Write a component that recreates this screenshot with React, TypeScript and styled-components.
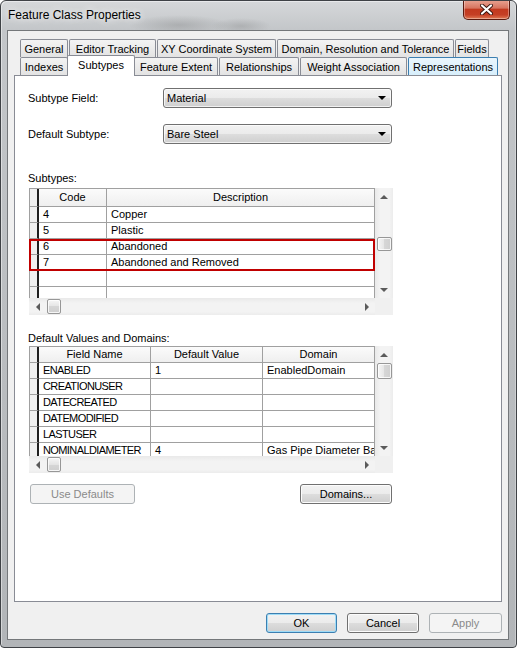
import styled, { createGlobalStyle, css } from 'styled-components';

type Dir = 'up' | 'down' | 'left' | 'right';

interface Column {
  title: string;
  width: number;
  tight?: boolean;
}

interface GridProps {
  columns: Column[];
  rows: string[][];
  headerHeight: number;
  highlight?: [number, number];
  thumbTop: number;
  thumbSize: number;
}

const GlobalStyle = createGlobalStyle`
  * { box-sizing: border-box; }
  html, body { margin: 0; padding: 0; background: #ffffff; }
  body {
    font-family: "Liberation Sans", Arial, sans-serif;
    font-size: 11px;
    color: #000;
  }
`;

const Window = styled.div`
  width: 517px;
  height: 648px;
  display: flex;
  flex-direction: column;
  border: 1px solid #3f4246;
  border-radius: 6px 6px 4px 4px;
  overflow: hidden;
  background:
    radial-gradient(ellipse 50px 10px at 178px 24px, rgba(80, 80, 80, 0.22), transparent),
    radial-gradient(ellipse 30px 8px at 240px 25px, rgba(80, 80, 80, 0.2), transparent),
    linear-gradient(to bottom, #d6d8da 0px, #c3c6c9 29px, #b2b5b8 100%);
  box-shadow: inset 1px 1px 0 rgba(255, 255, 255, 0.45), inset -1px 0 0 rgba(255, 255, 255, 0.3);
`;

const TitleBar = styled.div`
  height: 29px;
  flex: 0 0 29px;
  display: flex;
  align-items: flex-start;
  padding-left: 7px;
`;

const Title = styled.span`
  line-height: 29px;
  font-size: 12px;
  color: #000;
  text-shadow: 0 0 6px rgba(255, 255, 255, 0.9), 0 0 12px rgba(255, 255, 255, 0.7);
`;

const CloseButton = styled.div`
  margin: -1px 6px 0 auto;
  width: 47px;
  height: 20px;
  display: flex;
  align-items: center;
  justify-content: center;
  border: 1px solid #5a1a0f;
  border-top: none;
  border-radius: 0 0 5px 5px;
  background: linear-gradient(#e9a493 0%, #d77560 42%, #c2391f 50%, #c53f25 78%, #e07a55 100%);
  box-shadow: inset 0 0 0 1px rgba(255, 255, 255, 0.35);
`;

const Client = styled.div`
  margin-left: 6px;
  width: 502px;
  height: 610px;
  border: 1px solid #74777a;
  background: #f0f0f0;
  display: flex;
  flex-direction: column;
  padding-top: 8px;
`;

const TabStrip = styled.div`
  display: flex;
  flex-direction: column;
  padding-left: 12px;
`;

const TabRow = styled.div`
  display: flex;
  align-items: flex-start;
  height: 18px;
`;

const Tab = styled.div<{ $w: number; $active?: boolean; $hover?: boolean }>`
  width: ${p => p.$w}px;
  height: 18px;
  margin-right: 1px;
  border: 1px solid #898c95;
  border-bottom: none;
  border-radius: 2px 2px 0 0;
  background: linear-gradient(#f3f3f3, #e3e3e3);
  text-align: center;
  line-height: 18px;
  white-space: nowrap;
  ${p =>
    p.$hover &&
    css`
      border-color: #3c7fb1;
      background: linear-gradient(#eaf6fd, #d7eefb);
    `}
  ${p =>
    p.$active &&
    css`
      position: relative;
      z-index: 2;
      width: ${p.$w + 4}px;
      height: 21px;
      margin: -2px -1px 0 -2px;
      background: #ffffff;
      line-height: 19px;
    `}
`;

const Panel = styled.div`
  margin-left: 6px;
  width: 488px;
  height: 527px;
  border: 1px solid #898c95;
  background: #ffffff;
  display: flex;
  flex-direction: column;
  padding: 12px 0 0 14px;
`;

const FieldRow = styled.div<{ $gap: number }>`
  display: grid;
  grid-template-columns: 134px 229px;
  align-items: center;
  margin-top: ${p => p.$gap}px;
`;

const Label = styled.span`
  margin-left: -1px;
`;

const Combo = styled.div`
  height: 20px;
  border: 1px solid #707070;
  border-radius: 3px;
  background: linear-gradient(#f2f2f2 0%, #ebebeb 50%, #dddddd 50%, #cfcfcf 100%);
  box-shadow: inset 0 0 0 1px rgba(255, 255, 255, 0.7);
  display: flex;
  align-items: center;
  padding: 0 5px 0 3px;
`;

const ComboText = styled.span`
  flex: 1;
`;

const SectionLabel = styled.div<{ $top: number }>`
  margin: ${p => p.$top}px 0 0 -1px;
  line-height: 13px;
`;

const GridFrame = styled.div<{ $top: number }>`
  margin-top: ${p => p.$top}px;
  width: 364px;
  height: 127px;
  display: grid;
  grid-template-columns: 346px 18px;
  grid-template-rows: 110px 17px;
  background: #ffffff;
`;

const Cells = styled.div`
  overflow: hidden;
  border-top: 1px solid #a0a0a0;
  display: flex;
  flex-direction: column;
`;

const Row = styled.div<{ $h?: number }>`
  display: flex;
  flex: 0 0 ${p => p.$h ?? 16}px;
  height: ${p => p.$h ?? 16}px;
`;

const RowHead = styled.div`
  flex: 0 0 10px;
  border-left: 1px solid #a0a0a0;
  border-right: 2px solid #1f1f1f;
  border-bottom: 1px solid #a0a0a0;
  background: #f0f0f0;
`;

const Cell = styled.div<{ $w: number; $tight?: boolean }>`
  flex: 0 0 ${p => p.$w}px;
  border-right: 1px solid #a0a0a0;
  border-bottom: 1px solid #a0a0a0;
  padding-left: 4px;
  line-height: 15px;
  white-space: nowrap;
  overflow: hidden;
  letter-spacing: ${p => (p.$tight ? '-0.6px' : '0')};
`;

const HeadCell = styled(Cell)<{ $h: number }>`
  padding-left: 0;
  text-align: center;
  letter-spacing: 0;
  line-height: ${p => p.$h - 1}px;
  background: linear-gradient(#fbfbfb, #efefef);
`;

const Highlight = styled.div`
  position: relative;
  z-index: 1;
  display: flex;
  flex-direction: column;
  outline: 2px solid #c00000;
  outline-offset: -2px;
`;

const VScroll = styled.div`
  display: flex;
  flex-direction: column;
  background: linear-gradient(to right, #e9e9e9, #f3f3f3 30%, #f3f3f3 80%, #ececec);
`;

const HScroll = styled.div`
  display: flex;
  background: linear-gradient(#e9e9e9, #f3f3f3 30%, #f3f3f3 80%, #ececec);
`;

const Corner = styled.div`
  background: #f0f0f0;
`;

const ScrollButton = styled.div`
  flex: 0 0 17px;
  display: flex;
  align-items: center;
  justify-content: center;
`;

const Track = styled.div<{ $vertical?: boolean }>`
  flex: 1;
  display: flex;
  flex-direction: ${p => (p.$vertical ? 'column' : 'row')};
  align-items: center;
`;

const Thumb = styled.div<{ $vertical?: boolean; $offset: number; $size: number }>`
  border: 1px solid #979797;
  border-radius: 2px;
  ${p =>
    p.$vertical
      ? css`
          margin-top: ${p.$offset}px;
          width: 15px;
          height: ${p.$size}px;
          background: linear-gradient(to right, #f6f6f6, #e4e4e4 50%, #d6d6d6 50%, #cfcfcf);
        `
      : css`
          margin-left: ${p.$offset}px;
          width: ${p.$size}px;
          height: 15px;
          background: linear-gradient(#f6f6f6, #e4e4e4 50%, #d6d6d6 50%, #cfcfcf);
        `}
  box-shadow: inset 0 0 0 1px rgba(255, 255, 255, 0.8);
`;

const Arrow = styled.span<{ $dir: Dir }>`
  width: 0;
  height: 0;
  border-style: solid;
  border-color: transparent;
  ${p =>
    p.$dir === 'up' &&
    css`
      border-width: 0 4px 4px 4px;
      border-bottom-color: #5b5b5b;
    `}
  ${p =>
    p.$dir === 'down' &&
    css`
      border-width: 4px 4px 0 4px;
      border-top-color: #5b5b5b;
    `}
  ${p =>
    p.$dir === 'left' &&
    css`
      border-width: 4px 4px 4px 0;
      border-right-color: #5b5b5b;
    `}
  ${p =>
    p.$dir === 'right' &&
    css`
      border-width: 4px 0 4px 4px;
      border-left-color: #5b5b5b;
    `}
`;

const ComboArrow = styled.span`
  width: 0;
  height: 0;
  border-style: solid;
  border-width: 4px 4px 0 4px;
  border-color: #000 transparent transparent transparent;
`;

const PanelButtons = styled.div`
  margin-top: 11px;
  width: 364px;
  display: flex;
  justify-content: space-between;
  padding: 0 1px;
`;

const Button = styled.button<{ $w: number; $default?: boolean }>`
  width: ${p => p.$w}px;
  height: 20px;
  padding: 0;
  font-family: "Liberation Sans", Arial, sans-serif;
  font-size: 11px;
  color: #000;
  border: 1px solid #707070;
  border-radius: 3px;
  background: linear-gradient(#f2f2f2 0%, #ebebeb 50%, #dddddd 50%, #cfcfcf 100%);
  box-shadow: inset 0 0 0 1px #fcfcfc;
  ${p =>
    p.$default &&
    css`
      border-color: #3c7fb1;
      box-shadow: inset 0 0 0 1px #9fdcf7;
    `}
  &:disabled {
    color: #8a8a8a;
    border-color: #adb2b5;
    background: #f4f4f4;
    box-shadow: none;
  }
`;

const DialogButtons = styled.div`
  margin-top: 11px;
  display: flex;
  justify-content: flex-end;
  gap: 10px;
  padding-right: 6px;
`;

function CloseGlyph() {
  return (
    <svg width="13" height="11" viewBox="0 0 13 11">
      <path d="M2 1.5 L11 9.5 M11 1.5 L2 9.5" stroke="#3a1610" strokeWidth="4" strokeLinecap="round" />
      <path d="M2 1.5 L11 9.5 M11 1.5 L2 9.5" stroke="#ffffff" strokeWidth="2.2" strokeLinecap="round" />
    </svg>
  );
}

function DataGrid({ columns, rows, headerHeight, highlight, thumbTop, thumbSize }: GridProps) {
  const renderRow = (row: string[], i: number) => (
    <Row key={i}>
      <RowHead />
      {columns.map((c, j) => (
        <Cell key={j} $w={c.width} $tight={c.tight}>
          {row[j]}
        </Cell>
      ))}
    </Row>
  );

  const start = highlight ? highlight[0] : rows.length;
  const end = highlight ? highlight[0] + highlight[1] : rows.length;

  return (
    <>
      <Cells>
        <Row $h={headerHeight - 1}>
          <RowHead />
          {columns.map(c => (
            <HeadCell key={c.title} $w={c.width} $h={headerHeight - 1}>
              {c.title}
            </HeadCell>
          ))}
        </Row>
        {rows.slice(0, start).map((r, i) => renderRow(r, i))}
        {highlight && <Highlight>{rows.slice(start, end).map((r, i) => renderRow(r, start + i))}</Highlight>}
        {rows.slice(end).map((r, i) => renderRow(r, end + i))}
      </Cells>
      <VScroll>
        <ScrollButton>
          <Arrow $dir="up" />
        </ScrollButton>
        <Track $vertical>
          <Thumb $vertical $offset={thumbTop} $size={thumbSize} />
        </Track>
        <ScrollButton>
          <Arrow $dir="down" />
        </ScrollButton>
      </VScroll>
      <HScroll>
        <ScrollButton>
          <Arrow $dir="left" />
        </ScrollButton>
        <Track>
          <Thumb $offset={1} $size={14} />
        </Track>
        <ScrollButton>
          <Arrow $dir="right" />
        </ScrollButton>
      </HScroll>
      <Corner />
    </>
  );
}

const subtypeColumns: Column[] = [
  { title: 'Code', width: 68 },
  { title: 'Description', width: 268 },
];

const subtypeRows = [
  ['4', 'Copper'],
  ['5', 'Plastic'],
  ['6', 'Abandoned'],
  ['7', 'Abandoned and Removed'],
  ['', ''],
  ['', ''],
];

const defaultColumns: Column[] = [
  { title: 'Field Name', width: 112, tight: true },
  { title: 'Default Value', width: 112 },
  { title: 'Domain', width: 112 },
];

const defaultRows = [
  ['ENABLED', '1', 'EnabledDomain'],
  ['CREATIONUSER', '', ''],
  ['DATECREATED', '', ''],
  ['DATEMODIFIED', '', ''],
  ['LASTUSER', '', ''],
  ['NOMINALDIAMETER', '4', 'Gas Pipe Diameter Bare Steel'],
];

const backTabs = [
  { label: 'General', w: 48 },
  { label: 'Editor Tracking', w: 87 },
  { label: 'XY Coordinate System', w: 119 },
  { label: 'Domain, Resolution and Tolerance', w: 177 },
  { label: 'Fields', w: 34 },
];

const frontTabs = [
  { label: 'Indexes', w: 48 },
  { label: 'Subtypes', w: 64, active: true },
  { label: 'Feature Extent', w: 84 },
  { label: 'Relationships', w: 80 },
  { label: 'Weight Association', w: 107 },
  { label: 'Representations', w: 90, hover: true },
];

export default function App() {
  return (
    <>
      <GlobalStyle />
      <Window>
        <TitleBar>
          <Title>Feature Class Properties</Title>
          <CloseButton>
            <CloseGlyph />
          </CloseButton>
        </TitleBar>
        <Client>
          <TabStrip>
            <TabRow>
              {backTabs.map(t => (
                <Tab key={t.label} $w={t.w}>
                  {t.label}
                </Tab>
              ))}
            </TabRow>
            <TabRow>
              {frontTabs.map(t => (
                <Tab key={t.label} $w={t.w} $active={t.active} $hover={t.hover}>
                  {t.label}
                </Tab>
              ))}
            </TabRow>
          </TabStrip>
          <Panel>
            <FieldRow $gap={0}>
              <Label>Subtype Field:</Label>
              <Combo>
                <ComboText>Material</ComboText>
                <ComboArrow />
              </Combo>
            </FieldRow>
            <FieldRow $gap={16}>
              <Label>Default Subtype:</Label>
              <Combo>
                <ComboText>Bare Steel</ComboText>
                <ComboArrow />
              </Combo>
            </FieldRow>

            <SectionLabel $top={28}>Subtypes:</SectionLabel>
            <GridFrame $top={3}>
              <DataGrid
                columns={subtypeColumns}
                rows={subtypeRows}
                headerHeight={19}
                highlight={[2, 2]}
                thumbTop={32}
                thumbSize={14}
              />
            </GridFrame>

            <SectionLabel $top={17}>Default Values and Domains:</SectionLabel>
            <GridFrame $top={1}>
              <DataGrid
                columns={defaultColumns}
                rows={defaultRows}
                headerHeight={17}
                thumbTop={0}
                thumbSize={16}
              />
            </GridFrame>

            <PanelButtons>
              <Button $w={105} disabled>
                Use Defaults
              </Button>
              <Button $w={92}>Domains...</Button>
            </PanelButtons>
          </Panel>
          <DialogButtons>
            <Button $w={71} $default>
              OK
            </Button>
            <Button $w={72}>Cancel</Button>
            <Button $w={73} disabled>
              Apply
            </Button>
          </DialogButtons>
        </Client>
      </Window>
    </>
  );
}
